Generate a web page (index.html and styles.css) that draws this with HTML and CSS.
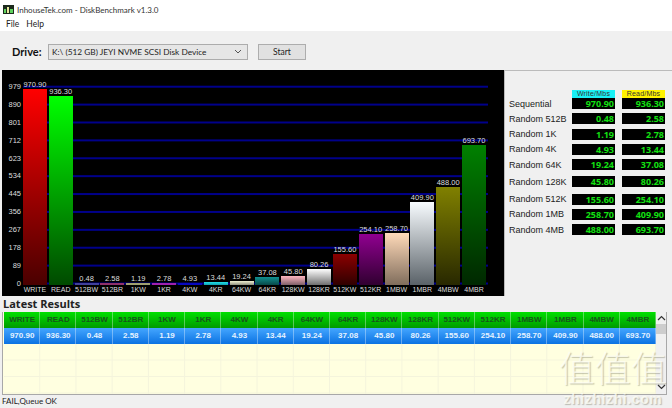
FILE: index.html
```html
<!DOCTYPE html>
<html lang="en">
<head>
    <meta charset="UTF-8">
    <title>InhouseTek.com - DiskBenchmark v1.3.0</title>
    <link rel="stylesheet" href="styles.css">
</head>
<body>
    <div class="titlebar">
        <svg class="app-icon" width="11" height="9" viewBox="0 0 11 9">
            <rect width="11" height="9" fill="#1c2a1c"/>
            <rect x="1" y="4" width="2" height="4" fill="#5fd35f"/>
            <rect x="4" y="2" width="2" height="6" fill="#e8e8a0"/>
            <rect x="7" y="4" width="3" height="4" fill="#5fd35f"/>
        </svg>
        <span>InhouseTek.com - DiskBenchmark v1.3.0</span>
    </div>
    <div class="menubar">
        <span>File</span>
        <span>Help</span>
    </div>

    <div class="toolbar">
        <label class="drive-label">Drive:</label>
        <div class="combo">
            <span>K:\ (512 GB) JEYI NVME SCSI Disk Device</span>
            <svg width="8" height="5" viewBox="0 0 8 5"><path d="M1 1l3 3 3-3" fill="none" stroke="#555" stroke-width="1"/></svg>
        </div>
        <button class="start-btn">Start</button>
    </div>

    <div class="main">
        <div class="chart">
            <div class="axis">
                <div>979</div><div>890</div><div>801</div><div>712</div><div>623</div><div>534</div>
                <div>445</div><div>356</div><div>267</div><div>178</div><div>89</div><div>0</div>
            </div>
            <div class="chart-body">
                <div class="plot">
                    <div class="col"><span>970.90</span><div class="bar c-write" style="height:196px"></div></div>
                    <div class="col"><span>936.30</span><div class="bar c-read" style="height:189px"></div></div>
                    <div class="col"><span>0.48</span><div class="bar c-512bw" style="height:2px"></div></div>
                    <div class="col"><span>2.58</span><div class="bar c-512br" style="height:2px"></div></div>
                    <div class="col"><span>1.19</span><div class="bar c-1kw" style="height:2px"></div></div>
                    <div class="col"><span>2.78</span><div class="bar c-1kr" style="height:2px"></div></div>
                    <div class="col"><span>4.93</span><div class="bar c-4kw" style="height:2px"></div></div>
                    <div class="col"><span>13.44</span><div class="bar c-4kr" style="height:3px"></div></div>
                    <div class="col"><span>19.24</span><div class="bar c-64kw" style="height:4px"></div></div>
                    <div class="col"><span>37.08</span><div class="bar c-64kr" style="height:8px"></div></div>
                    <div class="col"><span>45.80</span><div class="bar c-128kw" style="height:9px"></div></div>
                    <div class="col"><span>80.26</span><div class="bar c-128kr" style="height:16px"></div></div>
                    <div class="col"><span>155.60</span><div class="bar c-512kw" style="height:31px"></div></div>
                    <div class="col"><span>254.10</span><div class="bar c-512kr" style="height:51px"></div></div>
                    <div class="col"><span>258.70</span><div class="bar c-1mbw" style="height:52px"></div></div>
                    <div class="col"><span>409.90</span><div class="bar c-1mbr" style="height:83px"></div></div>
                    <div class="col"><span>488.00</span><div class="bar c-4mbw" style="height:98px"></div></div>
                    <div class="col"><span>693.70</span><div class="bar c-4mbr" style="height:140px"></div></div>
                </div>
                <div class="names">
                    <span>WRITE</span><span>READ</span><span>512BW</span><span>512BR</span><span>1KW</span><span>1KR</span>
                    <span>4KW</span><span>4KR</span><span>64KW</span><span>64KR</span><span>128KW</span><span>128KR</span>
                    <span>512KW</span><span>512KR</span><span>1MBW</span><span>1MBR</span><span>4MBW</span><span>4MBR</span>
                </div>
            </div>
        </div>

        <div class="scores">
            <div class="score-head">
                <div class="head-write">Write/Mbs</div>
                <div class="head-read">Read/Mbs</div>
            </div>
            <div class="score-row"><label>Sequential</label><output>970.90</output><output>936.30</output></div>
            <div class="score-row gap"><label>Random 512B</label><output>0.48</output><output>2.58</output></div>
            <div class="score-row gap"><label>Random 1K</label><output>1.19</output><output>2.78</output></div>
            <div class="score-row gap"><label>Random 4K</label><output>4.93</output><output>13.44</output></div>
            <div class="score-row gap"><label>Random 64K</label><output>19.24</output><output>37.08</output></div>
            <div class="score-row wide-gap"><label>Random 128K</label><output>45.80</output><output>80.26</output></div>
            <div class="score-row wide-gap"><label>Random 512K</label><output>155.60</output><output>254.10</output></div>
            <div class="score-row gap"><label>Random 1MB</label><output>258.70</output><output>409.90</output></div>
            <div class="score-row gap"><label>Random 4MB</label><output>488.00</output><output>693.70</output></div>
        </div>
    </div>

    <h2 class="latest-title">Latest Results</h2>

    <div class="results">
        <div class="results-table">
            <div class="results-row results-head">
                <span>WRITE</span><span>READ</span><span>512BW</span><span>512BR</span><span>1KW</span><span>1KR</span>
                <span>4KW</span><span>4KR</span><span>64KW</span><span>64KR</span><span>128KW</span><span>128KR</span>
                <span>512KW</span><span>512KR</span><span>1MBW</span><span>1MBR</span><span>4MBW</span><span>4MBR</span>
            </div>
            <div class="results-row results-selected">
                <span>970.90</span><span>936.30</span><span>0.48</span><span>2.58</span><span>1.19</span><span>2.78</span>
                <span>4.93</span><span>13.44</span><span>19.24</span><span>37.08</span><span>45.80</span><span>80.26</span>
                <span>155.60</span><span>254.10</span><span>258.70</span><span>409.90</span><span>488.00</span><span>693.70</span>
            </div>
            <div class="results-empty"></div>
        </div>
        <div class="scrollbar">
            <svg width="9" height="6" viewBox="0 0 9 6"><path d="M1 5l3.5-3.5L8 5" fill="none" stroke="#333" stroke-width="1.2"/></svg>
            <div class="thumb"></div>
            <svg class="arrow-down" width="9" height="6" viewBox="0 0 9 6"><path d="M1 1l3.5 3.5L8 1" fill="none" stroke="#333" stroke-width="1.2"/></svg>
        </div>
    </div>

    <div class="statusbar">FAIL,Queue OK</div>

    <div class="watermark">
        <div class="wm-glyphs">值值值</div>
        <div class="wm-url">zhizhizhi.com</div>
    </div>
</body>
</html>
```

FILE: styles.css
```css
/* general */
html, body {
    margin: 0;
    padding: 0;
}

body {
    position: relative;
    width: 672px;
    height: 408px;
    overflow: hidden;
    background-color: #f0f0f0;
    font-family: Lato, "Noto Sans", sans-serif;
    color: #222;
}

.titlebar {
    height: 18px;
    display: flex;
    align-items: center;
    padding: 1px 0 0 3px;
    box-sizing: border-box;
    background-color: #fff;
    font-size: 8px;
    color: #333;
}

.app-icon {
    margin-right: 3px;
}

.menubar {
    height: 13px;
    display: flex;
    gap: 7px;
    padding-left: 6px;
    background-color: #fff;
    font-size: 8.5px;
    line-height: 12px;
}

/* drive selector */
.toolbar {
    height: 39px;
    display: flex;
    align-items: center;
    box-sizing: border-box;
    padding: 2px 0 0 12px;
}

.drive-label {
    width: 36px;
    font-size: 11px;
    font-weight: bold;
    color: #111;
}

.combo {
    width: 200px;
    height: 16px;
    display: flex;
    align-items: center;
    justify-content: space-between;
    box-sizing: border-box;
    padding: 0 5px 0 3px;
    background-color: #e6e6e6;
    border: 1px solid #acacac;
    font-size: 8.3px;
}

.start-btn {
    width: 48px;
    height: 16px;
    margin-left: 10px;
    padding: 0;
    background-color: #e1e1e1;
    border: 1px solid #adadad;
    font-family: inherit;
    font-size: 8.5px;
    color: #222;
}

.main {
    height: 226px;
    display: flex;
}

/* chart */
.chart {
    width: 503px;
    margin-left: 2px;
    display: flex;
    background-color: #000;
    font-family: "Liberation Sans", Arial, sans-serif;
    color: #ddd;
}

.axis {
    width: 21px;
    padding-top: 8px;
    box-sizing: border-box;
    font-size: 7.5px;
    text-align: right;
}

.axis div {
    height: 17.9px;
    line-height: 17.9px;
    padding-right: 2px;
}

.chart-body {
    width: 465px;
}

.plot {
    height: 214.5px;
    display: flex;
    background-image: linear-gradient(to top, #00008b 1.5px, transparent 1.5px);
    background-size: 100% 17.9px;
    background-position: left bottom;
}

.col {
    flex: 1 1 0;
    min-width: 0;
    display: flex;
    flex-direction: column;
    justify-content: flex-end;
    align-items: center;
    font-size: 7.5px;
    line-height: 9px;
}

.bar {
    width: 24px;
    margin-right: 2px;
}

.col span {
    margin-right: 2px;
}

.names {
    display: flex;
    font-size: 7px;
    line-height: 10px;
}

.names span {
    flex: 1 1 0;
    min-width: 0;
    padding-right: 2px;
    text-align: center;
}

.c-write { background: linear-gradient(#ff0000, #4a0000); }
.c-read { background: linear-gradient(#00ff00, #004a00); }
.c-512bw { background: #40409c; }
.c-512br { background: #90306c; }
.c-1kw { background: #a0a070; }
.c-1kr { background: #a020b0; }
.c-4kw { background: #0808c0; }
.c-4kr { background: linear-gradient(#20e0e8, #10a0b0); }
.c-64kw { background: linear-gradient(#f0f0d0, #909080); }
.c-64kr { background: linear-gradient(#109090, #084848); }
.c-128kw { background: linear-gradient(#ffb6c1, #806068); }
.c-128kr { background: linear-gradient(#ffffff, #707070); }
.c-512kw { background: linear-gradient(#8b0000, #300000); }
.c-512kr { background: linear-gradient(#900090, #300030); }
.c-1mbw { background: linear-gradient(#ffdab9, #806d5c); }
.c-1mbr { background: linear-gradient(#f8fcff, #5a6268); }
.c-4mbw { background: linear-gradient(#808000, #282800); }
.c-4mbr { background: linear-gradient(#008000, #002800); }

/* score table */
.scores {
    flex: 1;
    box-sizing: border-box;
    padding: 19px 0 0 4px;
    border-top: 1px solid #bbb;
    border-left: 1px solid #bbb;
    font-family: "Liberation Sans", Arial, sans-serif;
    font-size: 9px;
}

.score-head {
    display: flex;
    gap: 7px;
    height: 8px;
    margin-left: 63px;
    font-size: 7px;
    letter-spacing: 0.2px;
    line-height: 7px;
    text-align: center;
    color: #333;
}

.score-head div {
    width: 43px;
}

.head-write {
    background-color: #19f0f5;
}

.head-read {
    background-color: #fff200;
}

.score-row {
    display: flex;
    align-items: center;
    height: 11px;
}

.score-row.gap {
    margin-top: 4.3px;
}

.score-row.wide-gap {
    margin-top: 6.2px;
}

.score-row label {
    width: 63px;
    white-space: nowrap;
}

.score-row output {
    width: 43px;
    height: 11px;
    margin-right: 7px;
    box-sizing: border-box;
    padding-right: 1px;
    background-color: #000;
    color: #12e012;
    font-family: "Open Sans", sans-serif;
    font-size: 9px;
    font-weight: bold;
    line-height: 11px;
    text-align: right;
}

/* latest results */
.latest-title {
    height: 16px;
    margin: 0;
    padding-left: 3px;
    font-family: "Open Sans", sans-serif;
    font-size: 11px;
    font-weight: bold;
    line-height: 15px;
    color: #222;
}

.results {
    width: 665px;
    height: 83px;
    margin-left: 2px;
    display: flex;
    box-sizing: border-box;
    border: 1px solid #a8a8a8;
    border-top: 0;
    background-color: #ffffe0;
}

.results-table {
    width: 652px;
    margin-left: 1px;
    display: flex;
    flex-direction: column;
}

.results-row {
    height: 16px;
    display: grid;
    grid-template-columns: repeat(18, 1fr);
    font-family: "Liberation Sans", Arial, sans-serif;
    font-size: 8px;
    font-weight: bold;
    line-height: 15px;
    text-align: center;
}

.results-row span {
    box-shadow: inset -1px 0 0 rgba(255, 255, 255, 0.35);
}

.results-head {
    background: linear-gradient(#00e000, #009a00);
    color: #16551a;
}

.results-selected {
    background: linear-gradient(#44a6ff, #0b72e2);
    color: #e4f2ff;
}

.results-empty {
    flex: 1;
    background-image:
        linear-gradient(to top, #f4f4dc 1px, transparent 1px),
        linear-gradient(to left, #f4f4dc 1px, transparent 1px);
    background-size: 36.22px 16.5px;
}

.scrollbar {
    flex: 1;
    display: flex;
    flex-direction: column;
    align-items: center;
    padding-top: 3px;
    background-color: #f0f0f0;
}

.thumb {
    width: 100%;
    height: 10px;
    margin-top: 3px;
    background-color: #cdcdcd;
}

.arrow-down {
    margin-top: auto;
    margin-bottom: 4px;
}

.statusbar {
    height: 13px;
    padding-left: 2px;
    font-size: 8px;
    line-height: 13px;
}

/* site watermark over the window */
.watermark {
    position: absolute;
    left: 559px;
    top: 340px;
    width: 108px;
    text-align: center;
    color: rgba(255, 255, 245, 0.75);
    text-shadow: 1px 1px 1px rgba(110, 110, 90, 0.4);
}

.wm-glyphs {
    font-family: "Noto Sans CJK SC", sans-serif;
    font-size: 36px;
    font-weight: 300;
    line-height: 52px;
    white-space: nowrap;
}

.wm-url {
    font-family: "Liberation Sans", Arial, sans-serif;
    font-size: 14px;
    font-weight: bold;
    letter-spacing: 0.6px;
    line-height: 14px;
    white-space: nowrap;
}
```
